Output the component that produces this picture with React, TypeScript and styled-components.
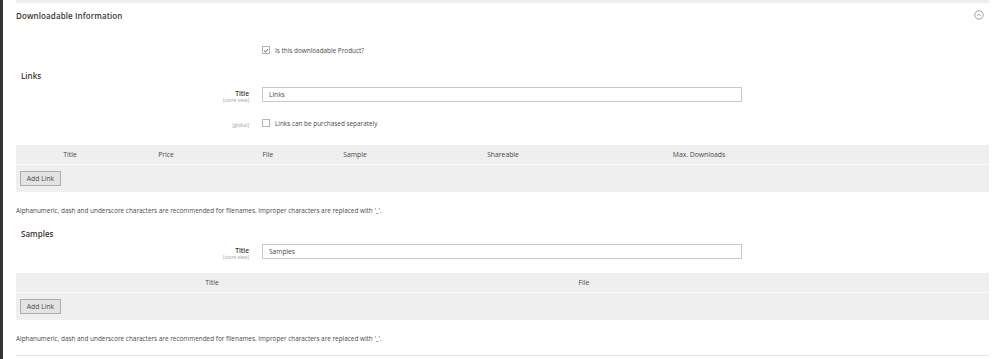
import React from 'react'
import styled, { createGlobalStyle } from 'styled-components'

const linkColumns = [
  { title: 'Title', width: 108 },
  { title: 'Price', width: 84 },
  { title: 'File', width: 120 },
  { title: 'Sample', width: 54 },
  { title: 'Shareable', width: 242 },
  { title: 'Max. Downloads', width: 150 },
]

const sampleColumns = [
  { title: 'Title', width: 392 },
  { title: 'File', width: 352 },
]

const NOTE =
  "Alphanumeric, dash and underscore characters are recommended for filenames. Improper characters are replaced with '_'."

function CheckBox({ checked }: { checked?: boolean }) {
  return (
    <Box>
      {checked && (
        <svg width="7" height="7" viewBox="0 0 10 10">
          <path d="M1.5 5.2 L4 7.6 L8.6 2.4" fill="none" stroke="#514943" strokeWidth="1.4" />
        </svg>
      )}
    </Box>
  )
}

function Grid({ columns }: { columns: { title: string; width: number }[] }) {
  return (
    <Table>
      <HeadRow>
        {columns.map((col) => (
          <HeadCell key={col.title} style={{ width: col.width }}>
            {col.title}
          </HeadCell>
        ))}
      </HeadRow>
      <BodyRow>
        <Button>Add Link</Button>
      </BodyRow>
    </Table>
  )
}

function App() {
  return (
    <>
      <GlobalStyle />
      <Page>
        <Section>
          <Header>
            <SectionTitle>Downloadable Information</SectionTitle>
            <svg width="10" height="10" viewBox="0 0 10 10">
              <circle cx="5" cy="5" r="4.2" fill="none" stroke="#8a8a8a" strokeWidth="0.8" />
              <path d="M3.2 5.8 L5 4 L6.8 5.8" fill="none" stroke="#8a8a8a" strokeWidth="0.8" />
            </svg>
          </Header>

          <Field $top={17}>
            <Label />
            <Control>
              <CheckBox checked />
              <CheckText>Is this downloadable Product?</CheckText>
            </Control>
          </Field>

          <Legend $top={14}>Links</Legend>

          <Field $top={5}>
            <Label>
              Title
              <Scope>[store view]</Scope>
            </Label>
            <Input defaultValue="Links" />
          </Field>

          <Field $top={14}>
            <Label $pad={6}>
              <Scope>[global]</Scope>
            </Label>
            <Control>
              <CheckBox />
              <CheckText>Links can be purchased separately</CheckText>
            </Control>
          </Field>

          <Spacer $h={16} />
          <Grid columns={linkColumns} />
          <Note>{NOTE}</Note>

          <Legend $top={13}>Samples</Legend>
          <Field $top={4}>
            <Label>
              Title
              <Scope>[store view]</Scope>
            </Label>
            <Input defaultValue="Samples" />
          </Field>

          <Spacer $h={13} />
          <Grid columns={sampleColumns} />
          <Note>{NOTE}</Note>
          <BottomLine />
        </Section>
      </Page>
    </>
  )
}

const GlobalStyle = createGlobalStyle`
  body {
    margin: 0;
    background: #fff;
    font-family: "Open Sans", "Noto Sans", sans-serif;
    color: #444;
  }
`

const Page = styled.div`
  height: 359px;
  border-left: 3px solid #333;
  overflow: hidden;
  box-sizing: border-box;
`

const Section = styled.div`
  margin: 0 11px 0 13px;
  border-top: 3px solid #eee;
`

const Header = styled.div`
  display: flex;
  align-items: center;
  justify-content: space-between;
  height: 24px;
  padding: 0 5px 0 0;
`

const SectionTitle = styled.div`
  font-size: 8px;
  font-weight: 600;
  letter-spacing: 0.1px;
  color: #41362f;
`

const Field = styled.div<{ $top: number }>`
  display: grid;
  grid-template-columns: 233px 480px;
  column-gap: 13px;
  align-items: start;
  margin-top: ${(p) => p.$top}px;
`

const Label = styled.div<{ $pad?: number }>`
  display: flex;
  flex-direction: column;
  align-items: flex-end;
  font-size: 6.6px;
  font-weight: 600;
  line-height: 8px;
  color: #3a3a3a;
  padding-top: ${(p) => p.$pad ?? 3}px;
`

const Scope = styled.span`
  font-size: 4.8px;
  line-height: 5px;
  font-weight: 400;
  color: #a0a0a0;
`

const Control = styled.div`
  display: flex;
  align-items: center;
  gap: 5px;
  height: 12px;
`

const Box = styled.span`
  display: inline-flex;
  align-items: center;
  justify-content: center;
  width: 8px;
  height: 8px;
  box-sizing: border-box;
  border: 1px solid #b5b5b5;
  background: #fff;
`

const CheckText = styled.span`
  font-size: 6.4px;
  color: #4a4a4a;
`

const Input = styled.input`
  box-sizing: border-box;
  width: 480px;
  height: 15px;
  border: 1px solid #c8c8c8;
  padding: 0 6px;
  font-family: inherit;
  font-size: 6.6px;
  color: #4a4a4a;
  outline: none;
`

const Legend = styled.div<{ $top: number }>`
  margin-top: ${(p) => p.$top}px;
  padding-left: 5px;
  font-size: 8px;
  line-height: 12px;
  font-weight: 600;
  color: #41362f;
`

const Spacer = styled.div<{ $h: number }>`
  height: ${(p) => p.$h}px;
`

const Table = styled.div`
  background: #efefef;
`

const HeadRow = styled.div`
  display: flex;
  height: 19px;
  align-items: center;
  border-bottom: 1px solid #fafafa;
`

const HeadCell = styled.div`
  text-align: center;
  font-size: 6.8px;
  font-weight: 400;
  color: #4a4a4a;
`

const BodyRow = styled.div`
  height: 27px;
  display: flex;
  align-items: center;
  padding-left: 4px;
`

const Button = styled.button`
  box-sizing: border-box;
  width: 41px;
  height: 15px;
  padding: 0;
  background: #e3e3e3;
  border: 1px solid #adadad;
  font-family: inherit;
  font-size: 6.8px;
  font-weight: 400;
  color: #514943;
`

const Note = styled.div`
  margin-top: 14px;
  font-size: 6.4px;
  line-height: 9px;
  color: #4a4a4a;
`

const BottomLine = styled.div`
  margin-top: 12px;
  border-top: 1px solid #e3e3e3;
`

export default App
